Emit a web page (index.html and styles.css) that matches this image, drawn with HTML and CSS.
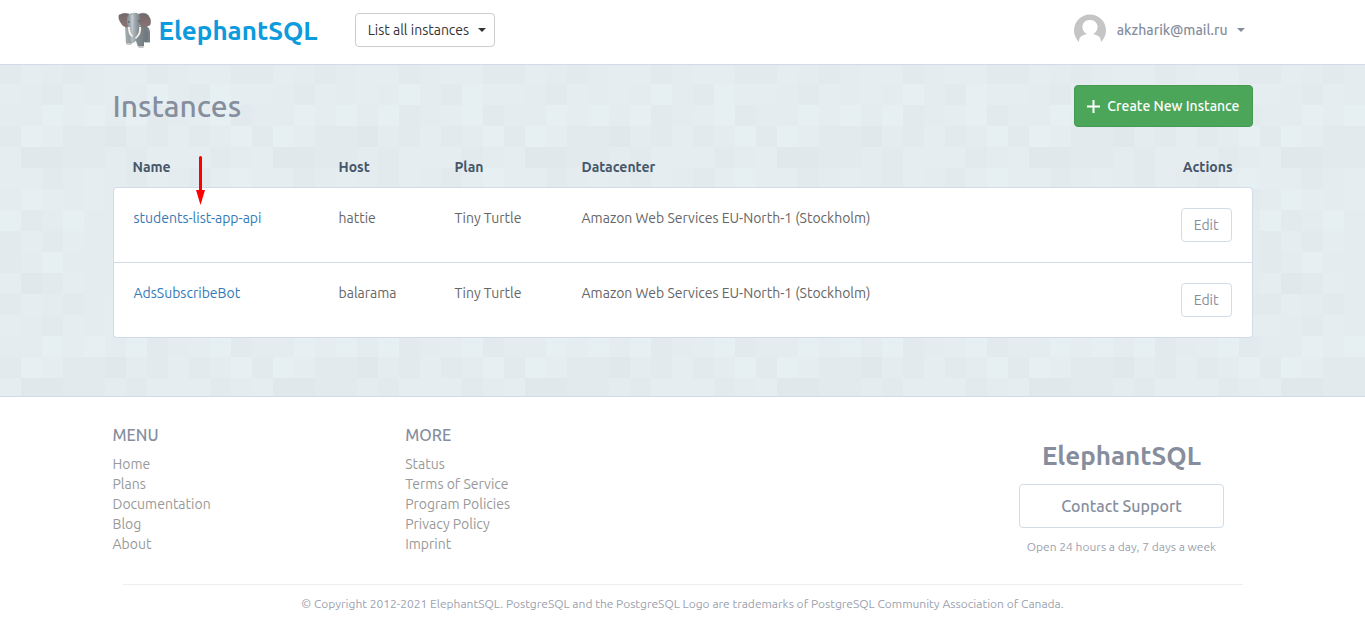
FILE: index.html
```html
<!DOCTYPE html>
<html lang="en">
<head>
<meta charset="utf-8">
<meta name="viewport" content="width=device-width, initial-scale=1">
<title>Instances - ElephantSQL</title>
<link rel="stylesheet" href="styles.css">
</head>
<body>
<header class="topbar">
  <div class="container topbar-inner">
    <a class="brand" href="#">
      <svg class="brand-logo" viewBox="0 0 34 36" aria-hidden="true">
        <defs>
          <linearGradient id="skin" x1="0" x2="1"><stop offset="0" stop-color="#a3abaf"/><stop offset=".5" stop-color="#858e93"/><stop offset="1" stop-color="#6b7479"/></linearGradient>
          <linearGradient id="face" x1="0" x2="1"><stop offset="0" stop-color="#7f8a91"/><stop offset=".4" stop-color="#b4bec4"/><stop offset="1" stop-color="#737d84"/></linearGradient>
          <linearGradient id="ear" x1="0" y1="0" x2="0" y2="1"><stop offset="0" stop-color="#73696c"/><stop offset="1" stop-color="#8c7270"/></linearGradient>
        </defs>
        <path fill="#788186" d="M23 13c6 0 9 3 9 8v10h-5l-3-6z"/>
        <path fill="url(#skin)" d="M7 14h20l3 8-1 8h-3v5q-3 1-6 0l-2-6h-3l-1 3q-3 1-6 0z"/>
        <path fill="#c3c6c4" d="M8 31h6v1q-3 1-6 0zM20 34h6v1q-3 1-6 0zM27 30h5v1h-5z"/>
        <path fill="url(#ear)" stroke="#6a6c70" stroke-width=".5" d="M11 2Q6 0 1 3q-1 4 2 8 2 4 6 4 3-2 3-8zM21 2q6-2 9 1 4 5 2 10-4 3-9 1-3-3-3-8z"/>
        <path fill="url(#face)" d="M9 6q1-5 6-5 6-1 7 4 1 6-1 10l-2 7-1 6q-1 3-3 3t-3-4l1-5q-1-4-3-7-2-5-1-9z"/>
        <path fill="#cbd2d6" opacity=".5" d="M13 3q3-1 3 3l-1 15q-2-4-2-9-1-5 0-9z"/>
        <path fill="#f5f1e4" d="M10 15q0 8 4 10l1-1q-3-3-3-9zM21 15q1 6-4 11l1 1q6-5 5-12z"/>
        <path fill="#394348" d="M10 9l2 1-1 1zm10 0 2-1-1 2z"/>
      </svg>
      <span class="brand-name">ElephantSQL</span>
    </a>
    <select class="instance-picker" aria-label="Instance">
      <option>List all instances</option>
    </select>
    <button class="account" type="button">
      <svg class="avatar" viewBox="0 0 32 32" aria-hidden="true">
        <path fill="#c5c5c5" d="M5 28A16 16 0 1 1 27 28C27 22 23 21 19 20 26 17 25 6 16 6S6 17 13 20C9 21 5 22 5 28z"/>
      </svg>
      <span>akzharik@mail.ru</span>
      <svg class="caret" viewBox="0 0 8 4" aria-hidden="true"><path fill="currentColor" d="M0 0h8L4 4z"/></svg>
    </button>
  </div>
</header>

<main class="content">
  <div class="container">
    <div class="page-head">
      <h1 class="page-title">Instances</h1>
      <a class="btn-create" href="#">
        <svg class="plus" viewBox="0 0 13 13" aria-hidden="true"><path fill="none" stroke="currentColor" stroke-width="2" d="M6.500 0v13M0 6.500h13"/></svg>
        Create New Instance
      </a>
    </div>
    <div class="table-wrap">
      <table class="instances">
        <colgroup><col class="col-name"><col class="col-host"><col class="col-plan"><col><col class="col-actions"></colgroup>
        <thead>
          <tr><th>Name</th><th>Host</th><th>Plan</th><th>Datacenter</th><th class="actions">Actions</th></tr>
        </thead>
        <tbody>
          <tr>
            <td><a href="#">students-list-app-api</a></td><td>hattie</td><td>Tiny Turtle</td>
            <td>Amazon Web Services EU-North-1 (Stockholm)</td>
            <td class="actions"><button class="btn-edit" type="button">Edit</button></td>
          </tr>
          <tr>
            <td><a href="#">AdsSubscribeBot</a></td><td>balarama</td><td>Tiny Turtle</td>
            <td>Amazon Web Services EU-North-1 (Stockholm)</td>
            <td class="actions"><button class="btn-edit" type="button">Edit</button></td>
          </tr>
        </tbody>
      </table>
      <svg class="pointer" viewBox="0 0 9 49" aria-hidden="true"><path fill="#f00" d="M3 1q1.500-2 3 0v33h3L4.500 49 0 34h3z"/></svg>
    </div>
  </div>
</main>

<footer class="footer">
  <div class="container">
    <div class="footer-grid">
      <nav class="footer-nav" aria-labelledby="menu-title">
        <h2 class="footer-title" id="menu-title">MENU</h2>
        <a href="#">Home</a><a href="#">Plans</a><a href="#">Documentation</a><a href="#">Blog</a><a href="#">About</a>
      </nav>
      <nav class="footer-nav" aria-labelledby="more-title">
        <h2 class="footer-title" id="more-title">MORE</h2>
        <a href="#">Status</a><a href="#">Terms of Service</a><a href="#">Program Policies</a><a href="#">Privacy Policy</a><a href="#">Imprint</a>
      </nav>
      <div class="support">
        <div class="support-name">ElephantSQL</div>
        <a class="btn-support" href="#">Contact Support</a>
        <p class="support-hours">Open 24 hours a day, 7 days a week</p>
      </div>
    </div>
    <p class="copyright">© Copyright 2012-2021 ElephantSQL. PostgreSQL and the PostgreSQL Logo are trademarks of PostgreSQL Community Association of Canada.</p>
  </div>
</footer>
</body>
</html>
```
FILE: styles.css
```css
* { box-sizing: border-box; }

body {
  margin: 0;
  background: #fff;
  color: #666;
  font: 14px/20px Ubuntu, "Noto Sans", sans-serif;
}

a { color: #337ab7; text-decoration: none; }
button, select { font: inherit; cursor: pointer; }

.container { max-width: 1140px; margin: 0 auto; }

.topbar { border-bottom: 1px solid #d1dce8; }
.topbar-inner {
  display: flex;
  align-items: center;
  height: 64px;
  padding: 0 8px 4px 5px;
}
.brand { display: flex; align-items: center; gap: 7px; }
.brand-logo { width: 34px; height: 36px; }
.brand-name { padding-top: 2px; color: #0c9bdc; font-size: 26px; line-height: 36px; font-weight: 700; }
.instance-picker {
  appearance: none;
  height: 34px;
  margin-left: 37px;
  padding: 0 24px 0 12px;
  border: 1px solid #ccc;
  border-radius: 4px;
  color: #333;
  background: #fff url("data:image/svg+xml,%3Csvg xmlns='http://www.w3.org/2000/svg' width='8' height='4'%3E%3Cpath fill='%23333' d='M0 0h8L4 4z'/%3E%3C/svg%3E") no-repeat right 8px center;
}
.account {
  display: flex;
  align-items: center;
  margin-left: auto;
  padding: 0;
  border: 0;
  color: #868e9e;
  background: none;
  font-weight: 500;
}
.avatar { width: 32px; height: 32px; margin-right: 11px; }
.caret { width: 8px; height: 4px; margin-left: 9px; }

.content {
  padding: 20px 0 58px;
  border-bottom: 1px solid #d1dce8;
  background: #e4ecef url("data:image/svg+xml,%3Csvg xmlns='http://www.w3.org/2000/svg' width='252' height='231' viewBox='0 0 12 11' shape-rendering='crispEdges' fill='none'%3E%3Cpath stroke='%23e2eaed' d='M0 .5h1M3 .5h1M7 .5h1M11 .5h1M2 1.5h1M9 1.5h1M7 2.5h1M11 2.5h1M0 3.5h1M3 3.5h2M7 3.5h1M9 3.5h1M3 4.5h2M6 4.5h1M10 4.5h1M2 5.5h1M6 5.5h1M9 5.5h1M11 6.5h1M1 7.5h1M0 8.5h1M2 8.5h1M0 9.5h1M2 10.5h1'/%3E%3Cpath stroke='%23e1e8eb' d='M5 3.5h1M1 4.5h2M1 10.5h1'/%3E%3Cpath stroke='%23e5edf0' d='M1 .5h1M5 .5h2M9 .5h2M0 1.5h1M3 1.5h1M5 1.5h1M11 1.5h1M3 2.5h1M9 2.5h1M2 3.5h1M8 3.5h1M0 4.5h1M7 4.5h3M0 5.5h2M4 5.5h1M7 5.5h1M10 5.5h1M2 6.5h1M4 6.5h1M1 8.5h1M3 8.5h1M0 10.5h1M3 10.5h1'/%3E%3Cpath stroke='%23e6eff2' d='M7 1.5h1M10 1.5h1M2 2.5h1M4 2.5h1M6 2.5h1M10 2.5h1M1 3.5h1M11 3.5h1M11 5.5h1M1 6.5h1M0 7.5h1M3 7.5h1M2 9.5h1'/%3E%3C/svg%3E") 0 -2px;
}
.page-head { display: flex; align-items: center; justify-content: space-between; }
.page-title { margin: 0; color: #868e9e; font-size: 30px; line-height: 42px; font-weight: 500; }
.btn-create {
  display: flex;
  align-items: center;
  gap: 7px;
  height: 42px;
  padding: 0 12px;
  border: 1px solid #439a50;
  border-radius: 4px;
  color: #fff;
  background: #4ca65a;
  font-weight: 500;
}
.plus { width: 13px; height: 13px; }

.table-wrap { position: relative; margin-top: 20px; }
.instances { width: 100%; table-layout: fixed; border-collapse: separate; border-spacing: 0; }
.col-name { width: 206px; }
.col-host { width: 116px; }
.col-plan { width: 127px; }
.col-actions { width: 110px; }
.instances th { padding: 10px 20px; color: #45566a; font-weight: 700; text-align: left; }
.instances td {
  height: 75px;
  padding: 20px;
  border-top: 1px solid #d1dce8;
  background: #fff;
  vertical-align: top;
}
.instances td:first-child { border-left: 1px solid #d1dce8; }
.instances td:last-child { border-right: 1px solid #d1dce8; }
.instances tr:first-child td:first-child { border-top-left-radius: 4px; }
.instances tr:first-child td:last-child { border-top-right-radius: 4px; }
.instances tbody tr:last-child td { height: 76px; border-bottom: 1px solid #d1dce8; }
.instances tr:last-child td:first-child { border-bottom-left-radius: 4px; }
.instances tr:last-child td:last-child { border-bottom-right-radius: 4px; }
.instances .actions { text-align: right; }
.btn-edit {
  height: 34px;
  padding: 0 12px;
  border: 1px solid #d1dce8;
  border-radius: 4px;
  color: #868e9e;
  background: #fff;
}
.pointer { position: absolute; top: 9px; left: 83px; width: 9px; height: 49px; }

.footer { padding: 28px 0 8px; }
.footer-grid { display: grid; grid-template-columns: 1fr 1fr 1fr 262px; }
.footer-nav { display: flex; flex-direction: column; align-items: flex-start; }
.footer-title { margin: 0 0 9px; color: #868e9e; font-size: 16px; line-height: 20px; font-weight: 500; }
.footer-nav a { color: #999; }
.support { grid-column: 4; display: flex; flex-direction: column; align-items: center; padding-top: 13px; }
.support-name { color: #868e9e; font-size: 26px; line-height: 36px; font-weight: 700; }
.btn-support {
  margin-top: 10px;
  padding: 11px 41px;
  border: 1px solid #d1dce8;
  border-radius: 4px;
  color: #868e9e;
  font-size: 16px;
  font-weight: 500;
}
.support-hours { margin: 9px 0 0; color: #9ba1ae; font-size: 12px; }
.copyright {
  margin: 27px 10px 0;
  padding-top: 9px;
  border-top: 1px solid #eee;
  color: #9ba1ae;
  font-size: 12px;
  text-align: center;
}
```
